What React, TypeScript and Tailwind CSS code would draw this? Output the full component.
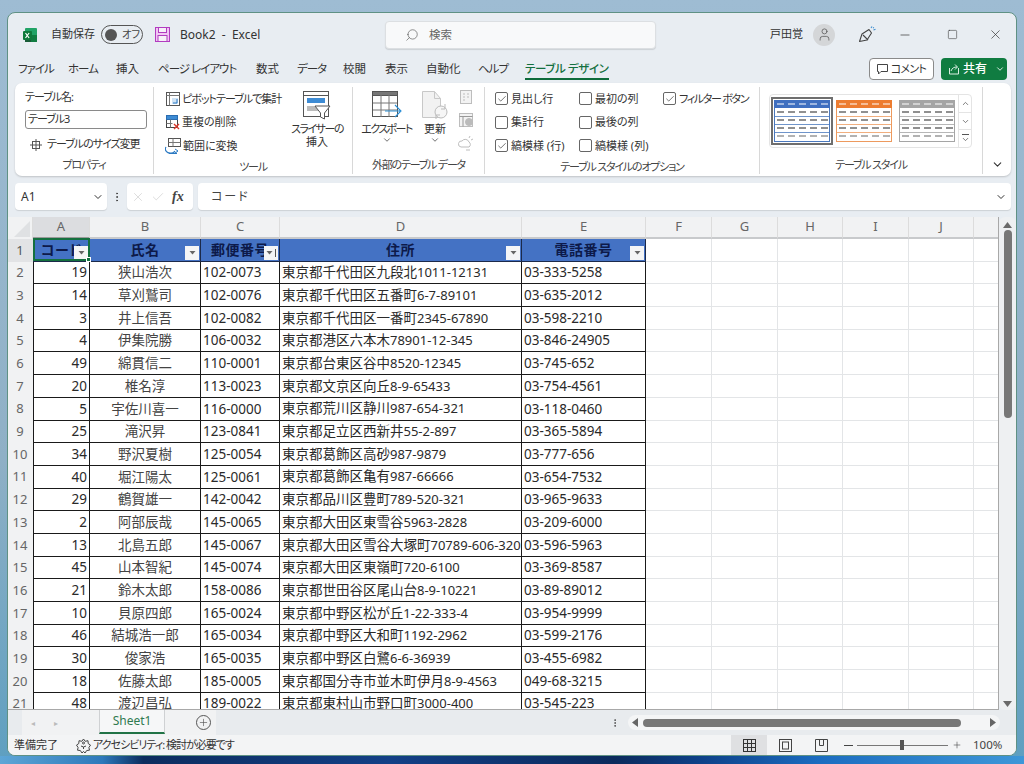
import React from "react";
import { Search, X, Minus, Square, ChevronDown, Check, Plus, User, ChevronUp, MoreVertical } from "lucide-react";

const FONT = "[font-family:'Noto_Sans','Noto_Sans_CJK_JP',sans-serif]";

const rows: [string, string, string, string, string][] = [
  ["19", "狭山浩次", "102-0073", "東京都千代田区九段北1011-12131", "03-333-5258"],
  ["14", "草刈鷲司", "102-0076", "東京都千代田区五番町6-7-89101", "03-635-2012"],
  ["3", "井上信吾", "102-0082", "東京都千代田区一番町2345-67890", "03-598-2210"],
  ["4", "伊集院勝", "106-0032", "東京都港区六本木78901-12-345", "03-846-24905"],
  ["49", "綿貫信二", "110-0001", "東京都台東区谷中8520-12345", "03-745-652"],
  ["20", "椎名淳", "113-0023", "東京都文京区向丘8-9-65433", "03-754-4561"],
  ["5", "宇佐川喜一", "116-0000", "東京都荒川区静川987-654-321", "03-118-0460"],
  ["25", "滝沢昇", "123-0841", "東京都足立区西新井55-2-897", "03-365-5894"],
  ["34", "野沢夏樹", "125-0054", "東京都葛飾区高砂987-9879", "03-777-656"],
  ["40", "堀江陽太", "125-0061", "東京都葛飾区亀有987-66666", "03-654-7532"],
  ["29", "鶴賀雄一", "142-0042", "東京都品川区豊町789-520-321", "03-965-9633"],
  ["2", "阿部辰哉", "145-0065", "東京都大田区東雪谷5963-2828", "03-209-6000"],
  ["13", "北島五郎", "145-0067", "東京都大田区雪谷大塚町70789-606-320", "03-596-5963"],
  ["45", "山本智紀", "145-0074", "東京都大田区東嶺町720-6100", "03-369-8587"],
  ["21", "鈴木太郎", "158-0086", "東京都世田谷区尾山台8-9-10221", "03-89-89012"],
  ["10", "貝原四郎", "165-0024", "東京都中野区松が丘1-22-333-4", "03-954-9999"],
  ["46", "結城浩一郎", "165-0034", "東京都中野区大和町1192-2962", "03-599-2176"],
  ["30", "俊家浩", "165-0035", "東京都中野区白鷺6-6-36939", "03-455-6982"],
  ["18", "佐藤太郎", "185-0005", "東京都国分寺市並木町伊月8-9-4563", "049-68-3215"],
  ["48", "渡辺昌弘", "189-0022", "東京都東村山市野口町3000-400", "03-545-223"],
];

const widths = ["w-[57px]", "w-[111px]", "w-[79px]", "w-[242px]", "w-[124px]"];
const emptyCols = ["w-[66px]", "w-[66px]", "w-[65px]", "w-[66px]", "w-[65px]", "w-[25px]"];

function Address({ text }: { text: string }) {
  const parts = text.split(/([\x00-\x7f]+)/).filter(Boolean);
  return (
    <span>
      {parts.map((p, i) => (
        <span key={i} className={/^[\x00-\x7f]/.test(p) ? "text-[13px]" : "text-[13.5px]"}>{p}</span>
      ))}
    </span>
  );
}

function EmptyCells() {
  return (
    <>
      {emptyCols.map((w, i) => (
        <div key={i} className={`${w} shrink-0 bg-white border-r border-b border-[#e3e5e7]`} />
      ))}
    </>
  );
}

function FilterBtn({ sorted }: { sorted?: boolean }) {
  return (
    <div className="absolute right-[1px] bottom-[1px] w-[14px] h-[14px] bg-[#f4f5f6] flex items-center justify-center gap-[1px]">
      <svg width="7" height="5" viewBox="0 0 7 5"><path d="M0.5 1h6L3.5 4.5z" fill="#666" /></svg>
      {sorted && <svg width="3" height="8" viewBox="0 0 3 8"><path d="M1.5 0v8" stroke="#555" strokeWidth="1" /></svg>}
    </div>
  );
}

function HeaderCell({ w, text, sorted, first }: { w: string; text: string; sorted?: boolean; first?: boolean }) {
  return (
    <div className={`${w} shrink-0 relative h-full bg-[#4472c4] border-r border-b border-[#1c2a4a] flex items-center justify-center overflow-hidden font-bold text-[14px] text-[#0d1a4a] tracking-[0.5px] ${first ? "pl-[1px]" : ""}`}>
      <span className="whitespace-nowrap">{text}</span>
      <FilterBtn sorted={sorted} />
    </div>
  );
}

function Check13({ on, label, w, tight }: { on?: boolean; label?: string; w: string; tight?: boolean }) {
  return (
    <div className={`${w} flex items-center gap-[3px] h-[23.5px] shrink-0`}>
      <div className="w-[13px] h-[13px] rounded-[2px] border border-[#666] bg-white flex items-center justify-center">
        {on && <Check size={10} strokeWidth={1.6} className="text-[#333]" />}
      </div>
      <span className={`whitespace-nowrap text-[11px] text-[#333] ${tight ? "tracking-[-1.3px]" : ""}`}>{label}</span>
    </div>
  );
}

function TablePreview({ head, line }: { head: string; line: string }) {
  const dashes = [3, 14, 25, 36, 47];
  return (
    <svg width="56" height="42" viewBox="0 0 56 42" className="shrink-0">
      <rect x="0.5" y="0.5" width="55" height="41" fill="#fff" stroke={line} />
      <rect x="0" y="0" width="56" height="8" fill={head} />
      {[16.5, 24.5, 32.5].map((y) => (
        <line key={y} x1="0" x2="56" y1={y} y2={y} stroke={line} strokeWidth="0.8" />
      ))}
      {dashes.map((x) => (
        <g key={x}>
          <rect x={x} y="3.5" width="7" height="1" fill="#fff" />
          {[12, 20, 28, 36].map((y, i) => (
            <rect key={y} x={x} y={y - 0.5} width="7" height="1" fill={i === 3 ? "#666" : "#222"} />
          ))}
        </g>
      ))}
    </svg>
  );
}

function ExcelIcon() {
  return (
    <svg width="16" height="16" viewBox="0 0 16 16" className="shrink-0">
      <rect x="3" y="1" width="12" height="14" rx="1" fill="#21a366" />
      <rect x="9" y="8" width="6" height="7" fill="#107c41" />
      <rect x="3" y="8" width="6" height="7" fill="#185c37" />
      <rect x="1" y="4" width="9" height="9" rx="1" fill="#0f7a3c" />
      <path d="M3.5 6l3.6 5M7.1 6l-3.6 5" stroke="#fff" strokeWidth="1.2" />
    </svg>
  );
}

function SaveIcon() {
  return (
    <svg width="15" height="15" viewBox="0 0 15 15" className="shrink-0">
      <rect x="0.5" y="0.5" width="14" height="14" fill="#f1c6f4" stroke="#b23cc0" />
      <rect x="3.5" y="0.5" width="8" height="5" fill="#f6f0f8" stroke="#b23cc0" />
      <rect x="3" y="8.5" width="9" height="6" fill="#f6f0f8" stroke="#b23cc0" />
    </svg>
  );
}

function WandIcon() {
  return (
    <svg width="18" height="18" viewBox="0 0 18 18" fill="none" stroke="#444" strokeWidth="1.1" className="shrink-0">
      <path d="M1.5 15.5L4 8l7-4.5 2.5 3.5L9 14l-7.5 1.5z" strokeLinejoin="round" />
      <path d="M5 9l5 5" />
      <path d="M13 2l1-1.5M15.5 4l2-.8M15 1.5l1 .5" stroke="#3f8fd0" />
    </svg>
  );
}

function PivotIcon() {
  return (
    <svg width="16" height="16" viewBox="0 0 16 16" fill="none" className="shrink-0">
      <rect x="1.5" y="1.5" width="13" height="13" fill="#fff" stroke="#555" />
      <path d="M1.5 4.5h13M4.5 1.5v13" stroke="#777" />
      <path d="M7 7h6v6H7z" fill="#cfe3f5" />
      <path d="M8 12h4V8" stroke="#2b79c2" />
    </svg>
  );
}

function DupIcon() {
  return (
    <svg width="16" height="16" viewBox="0 0 16 16" fill="none" className="shrink-0">
      <rect x="1.5" y="1.5" width="11" height="12" fill="#fff" stroke="#444" />
      <rect x="1.5" y="1.5" width="11" height="4" fill="#3d8bd4" stroke="#2b6cb0" />
      <path d="M1.5 9.5h6M5.5 5.5v8" stroke="#777" />
      <path d="M9 10l5 5M14 10l-5 5" stroke="#d9392c" strokeWidth="1.4" />
    </svg>
  );
}

function ConvertIcon() {
  return (
    <svg width="17" height="16" viewBox="0 0 17 16" fill="none" className="shrink-0">
      <rect x="3.5" y="0.5" width="12" height="8" fill="#fff" stroke="#555" />
      <path d="M3.5 4.5h12M8 .5v8" stroke="#777" />
      <path d="M1 9a5 4 0 0 0 9 4" stroke="#2b79c2" strokeWidth="1.3" />
      <path d="M4 15.5h8" stroke="#2b79c2" strokeWidth="1.3" />
      <path d="M10 11l3 2-3 2" stroke="#2b79c2" />
    </svg>
  );
}

function SliceIcon() {
  return (
    <svg width="28" height="30" viewBox="0 0 28 30" fill="none" className="shrink-0">
      <rect x="0.5" y="0.5" width="25" height="25" fill="#fff" stroke="#555" />
      <path d="M0.5 4.5h25" stroke="#555" />
      <rect x="4" y="7" width="18" height="5" fill="#3d8bd4" />
      <rect x="4" y="15" width="11" height="5" fill="#bbb" />
      <path d="M12 15h15l-5.5 7v6l-4-2v-4z" fill="#fff" stroke="#555" />
    </svg>
  );
}

function ExportIcon() {
  return (
    <svg width="30" height="30" viewBox="0 0 30 30" fill="none" className="shrink-0">
      <rect x="0.5" y="0.5" width="25" height="25" fill="#fff" stroke="#555" />
      <rect x="0.5" y="0.5" width="25" height="4" fill="#777" stroke="#555" />
      <path d="M9 4v22M17 4v22M1 12h24M1 19h24" stroke="#777" />
      <path d="M13 20h15M23 14l6 6-6 6" stroke="#2b8fd6" strokeWidth="1.1" fill="none" />
    </svg>
  );
}

function RefreshIcon() {
  return (
    <svg width="28" height="30" viewBox="0 0 28 30" fill="none" className="shrink-0">
      <path d="M1.5.5h12l6 7v19h-18z" fill="#f2f2f2" stroke="#c8c8c8" />
      <path d="M13.5.5v7h6" stroke="#c8c8c8" />
      <circle cx="20" cy="21" r="6" fill="#f6f6f6" stroke="#bbb" />
      <path d="M24 13v5h-4M15 28v-4h4" stroke="#bbb" />
    </svg>
  );
}

function SmallGrey({ k }: { k: number }) {
  return (
    <svg width="16" height="16" viewBox="0 0 16 16" fill="none" stroke="#bdbdbd" className="shrink-0">
      {k === 0 && (
        <>
          <rect x="2.5" y="1.5" width="11" height="13" fill="#f3f3f3" />
          <path d="M5 5h2M9 5h2M5 8h2M9 8h2M5 11h2" />
        </>
      )}
      {k === 1 && (
        <>
          <rect x="1.5" y="1.5" width="13" height="13" fill="#f3f3f3" />
          <path d="M1.5 4.5h13M5 4.5v10" stroke="#999" />
          <circle cx="11" cy="10" r="3.5" fill="#bbb" stroke="#bbb" />
        </>
      )}
      {k === 2 && (
        <>
          <path d="M3 12a3 3 0 0 1 1-6 4 4 0 0 1 7 1 3 3 0 0 1 0 5z" />
          <path d="M12 1l-1 2M15 4l-2 1M8 15h4" />
        </>
      )}
    </svg>
  );
}

function ToolRow({ icon, text, tight }: { icon: React.ReactNode; text: string; tight?: boolean }) {
  return (
    <div className="flex items-center gap-[1px] h-[23.5px] whitespace-nowrap text-[11px] text-[#333]">
      {icon}
      <span className={tight ? "tracking-[-1px]" : ""}>{text}</span>
    </div>
  );
}

function GroupLabel({ children }: { children: string }) {
  return <div className="h-[18px] text-center text-[11px] text-[#444] leading-[18px] whitespace-nowrap tracking-[-1.2px]">{children}</div>;
}

const tabs: [string, string][] = [
  ["ファイル", "w-[34px] tracking-[-1px]"],
  ["ホーム", "ml-[16px] w-[30px] tracking-[-1px]"],
  ["挿入", "ml-[18px] w-[23px]"],
  ["ページ レイアウト", "ml-[19px] w-[79px] tracking-[-1px]"],
  ["数式", "ml-[19px] w-[23px]"],
  ["データ", "ml-[18px] w-[29px] tracking-[-1px]"],
  ["校閲", "ml-[17px] w-[23px]"],
  ["表示", "ml-[19px] w-[23px]"],
  ["自動化", "ml-[18px] w-[35px]"],
  ["ヘルプ", "ml-[17px] w-[30px] tracking-[-1px]"],
];

export default function App() {
  return (
    <div className={`w-[1024px] h-[764px] overflow-hidden pt-[12px] pl-[7px] bg-[linear-gradient(180deg,#9ebcd3_0%,#8fb0c6_60%,#5e9fc0_100%)] ${FONT}`}>
      <div className="w-[1010px] h-[744px] rounded-[8px] border border-[#5f9184] bg-[#e8edf2] overflow-hidden flex flex-col [font-feature-settings:'palt']">
        {/* title bar */}
        <div className="h-[43px] shrink-0 flex items-center pl-[14px] text-[12px] text-[#333]">
          <ExcelIcon />
          <span className="ml-[13px] w-[46px] text-[11px] whitespace-nowrap">自動保存</span>
          <div className="ml-[4px] w-[42px] h-[19px] rounded-full border border-[#555] flex items-center pl-[3px] gap-[5px] text-[10.5px] text-[#444]">
            <div className="w-[12px] h-[12px] rounded-full bg-[#555]" />
            <span className="tracking-[-0.5px]">オフ</span>
          </div>
          <div className="ml-[12px]"><SaveIcon /></div>
          <span className="ml-[10px] text-[12px] whitespace-nowrap w-[205px]">Book2&nbsp; -&nbsp; Excel</span>
          <div className="w-[271px] h-[28px] rounded-[4px] bg-[#f8f9fa] border border-[#dcdfe2] flex items-center pl-[19px] text-[11.5px] text-[#666] shadow-[0_1px_1px_rgba(0,0,0,0.12)]">
            <Search size={14} strokeWidth={1.1} className="-scale-x-100 text-[#555]" />
            <span className="ml-[10px]">検索</span>
          </div>
          <span className="ml-[114px] w-[34px] text-[11px] whitespace-nowrap">戸田覚</span>
          <div className="ml-[9px] w-[22px] h-[22px] rounded-full bg-[#d4d6d8] flex items-center justify-center">
            <User size={15} strokeWidth={1.2} className="text-[#555]" />
          </div>
          <div className="ml-[23px]"><WandIcon /></div>
          <Minus size={14} strokeWidth={1.2} className="ml-[22px] text-[#333]" />
          <Square size={11} strokeWidth={1.2} className="ml-[35px] text-[#333]" />
          <X size={15} strokeWidth={1.1} className="ml-[30px] text-[#333]" />
        </div>

        {/* tabs */}
        <div className="h-[27px] shrink-0 flex items-start pl-[10px] pt-[3px] text-[11.5px] text-[#333]">
          <div className="flex h-[20px] items-center w-[507px]">
            {tabs.map(([t, cls]) => (
              <span key={t} className={`${cls} shrink-0 whitespace-nowrap`}>{t}</span>
            ))}
          </div>
          <div className="h-[21px] w-[84px] border-b-2 border-[#0e6b3a] text-[#14703f] font-medium whitespace-nowrap flex items-center tracking-[-0.4px]">テーブル デザイン</div>
          <div className="ml-[260px] -mt-[1px] w-[65px] h-[22px] bg-white border border-[#8a8a8a] rounded-[4px] flex items-center justify-center gap-[3px] text-[11px]">
            <svg width="11" height="11" viewBox="0 0 11 11" fill="none" stroke="#444"><path d="M.5.5h10v7H4l-2.500 2.500V7.500h-1z" /></svg>
            <span className="whitespace-nowrap tracking-[-0.7px]">コメント</span>
          </div>
          <div className="ml-[7px] -mt-[1px] w-[66px] h-[22px] bg-[#107c41] rounded-[4px] flex items-center pl-[7px] text-white text-[12px] whitespace-nowrap">
            <svg width="12" height="12" viewBox="0 0 12 12" fill="none" stroke="#d9eee2"><path d="M1.500 5v6h9V5M3 8c1-3 3-4 6-4M7 1.500L9.500 4 7 6.500" /></svg>
            <span className="ml-[3px] font-medium">共有</span>
            <ChevronDown size={10} strokeWidth={2} className="ml-[8px]" />
          </div>
        </div>

        {/* ribbon */}
        <div className="ml-[7px] w-[996px] h-[93px] shrink-0 bg-white rounded-[7px] shadow-[0_1px_2px_rgba(0,0,0,0.18)] flex pt-[4px] pb-[2px]">
          {/* properties */}
          <div className="w-[139px] shrink-0 border-r border-[#d8d8d8] flex flex-col pl-[10px]">
            <div className="h-[16px] mt-[2px] text-[11px] text-[#333] leading-[16px] tracking-[-1px]">テーブル名:</div>
            <div className="mt-[5px] w-[122px] h-[19px] rounded-[3px] border border-[#8a8a8a] pl-[2px] text-[11px] text-[#333] flex items-center tracking-[-1px]">テーブル3</div>
            <div className="mt-[4px] h-[23px] pl-[5px] flex items-center text-[11px] text-[#333] whitespace-nowrap">
              <svg width="12" height="12" viewBox="0 0 12 12" fill="none" stroke="#555" className="shrink-0">
                <rect x="2.500" y="2.500" width="7" height="7" />
                <path d="M2.500 6h7M6 0v12M0 6h2M10 6h2" />
              </svg>
              <span className="ml-[5px] tracking-[-1px]">テーブルのサイズ変更</span>
            </div>
            <div className="mt-auto pr-[10px]"><GroupLabel>プロパティ</GroupLabel></div>
          </div>

          {/* tools */}
          <div className="w-[199px] shrink-0 border-r border-[#d8d8d8] flex flex-col">
            <div className="flex flex-1">
              <div className="pl-[11px] w-[135px] flex flex-col">
                <ToolRow tight icon={<PivotIcon />} text="ピボットテーブルで集計" />
                <ToolRow icon={<DupIcon />} text="重複の削除" />
                <ToolRow icon={<ConvertIcon />} text="範囲に変換" />
              </div>
              <div className="w-[56px] flex flex-col items-center pt-[4px] text-[11px] text-[#333] leading-[13px] text-center">
                <SliceIcon />
                <span className="mt-[1px] whitespace-nowrap tracking-[-1.5px]">スライサーの</span>
                <span>挿入</span>
              </div>
            </div>
            <GroupLabel>ツール</GroupLabel>
          </div>

          {/* external */}
          <div className="w-[132px] shrink-0 border-r border-[#d8d8d8] flex flex-col">
            <div className="flex flex-1">
              <div className="w-[67px] flex flex-col items-center pt-[4px] text-[11px] text-[#333]">
                <ExportIcon />
                <span className="mt-[1px] leading-[13px] whitespace-nowrap tracking-[-1.6px]">エクスポート</span>
                <ChevronDown size={10} className="text-[#555]" />
              </div>
              <div className="w-[36px] -ml-[3px] flex flex-col items-center pt-[4px] text-[11px] text-[#333]">
                <RefreshIcon />
                <span className="mt-[1px] leading-[13px]">更新</span>
                <ChevronDown size={10} className="text-[#555]" />
              </div>
              <div className="ml-[5px] pt-[2px] flex flex-col gap-[7px]">
                <SmallGrey k={0} />
                <SmallGrey k={1} />
                <SmallGrey k={2} />
              </div>
            </div>
            <GroupLabel>外部のテーブル データ</GroupLabel>
          </div>

          {/* options */}
          <div className="w-[275px] shrink-0 border-r border-[#d8d8d8] flex flex-col pl-[10px]">
            <div className="flex-1 flex">
              <div className="flex flex-col w-[84px] shrink-0">
                <Check13 on w="w-[84px]" label="見出し行" />
                <Check13 w="w-[84px]" label="集計行" />
                <Check13 on w="w-[84px]" label="縞模様 (行)" />
              </div>
              <div className="flex flex-col w-[84px] shrink-0">
                <Check13 w="w-[84px]" label="最初の列" />
                <Check13 w="w-[84px]" label="最後の列" />
                <Check13 w="w-[84px]" label="縞模様 (列)" />
              </div>
              <div className="flex flex-col">
                <Check13 tight on w="w-[90px]" label="フィルター ボタン" />
              </div>
            </div>
            <div className="pr-[10px]"><GroupLabel>テーブル スタイルのオプション</GroupLabel></div>
          </div>

          {/* styles */}
          <div className="w-[223px] shrink-0 border-r border-[#d8d8d8] flex flex-col pl-[9px] pr-[9px]">
            <div className="mt-[7px] h-[54px] w-[203px] rounded-[4px] border border-[#e4e4e4] flex items-center">
              <div className="flex-1 flex items-center">
                <div className="ml-[1px] border-2 border-[#6e6e6e] p-[1.5px] w-[62px] h-[48px] flex items-center justify-center">
                  <TablePreview head="#3f6fc0" line="#4a78bd" />
                </div>
                <div className="ml-[3px]"><TablePreview head="#ed7d31" line="#ed9a5e" /></div>
                <div className="ml-[7px]"><TablePreview head="#a5a5a5" line="#a5a5a5" /></div>
              </div>
              <div className="w-[13px] h-full border-l border-[#e4e4e4] flex flex-col text-[#555]">
                <div className="flex-1 flex items-center justify-center border-b border-[#e4e4e4]"><ChevronUp size={9} strokeWidth={2} /></div>
                <div className="flex-1 flex items-center justify-center border-b border-[#e4e4e4]"><ChevronDown size={9} strokeWidth={2} /></div>
                <div className="flex-1 flex flex-col items-center justify-center">
                  <div className="w-[7px] h-px bg-[#555]" />
                  <ChevronDown size={9} strokeWidth={2} />
                </div>
              </div>
            </div>
            <div className="mt-auto"><GroupLabel>テーブル スタイル</GroupLabel></div>
          </div>
          <div className="flex-1 flex items-end justify-center pb-[3px]">
            <ChevronDown size={13} strokeWidth={2} className="text-[#333]" />
          </div>
        </div>

        {/* formula bar */}
        <div className="mt-[7px] ml-[7px] w-[996px] h-[27px] shrink-0 flex items-stretch">
          <div className="w-[92px] bg-white rounded-[4px] shadow-[0_1px_1px_rgba(0,0,0,0.12)] flex items-center pl-[6px] pr-[3px] justify-between text-[12px] text-[#333]">
            <span>A1</span>
            <ChevronDown size={12} strokeWidth={2} />
          </div>
          <div className="w-[20px] flex items-center justify-center text-[#444]"><MoreVertical size={12} /></div>
          <div className="w-[66px] bg-white rounded-[4px] shadow-[0_1px_1px_rgba(0,0,0,0.12)] flex items-center pl-[4px] text-[#c4c4c4]">
            <X size={14} strokeWidth={1} />
            <Check size={14} strokeWidth={1} className="ml-[6px]" />
            <span className="ml-[7px] [font-family:'Liberation_Serif',serif] italic font-bold text-[14px] text-[#444]">fx</span>
          </div>
          <div className="ml-[5px] flex-1 bg-white rounded-[4px] shadow-[0_1px_1px_rgba(0,0,0,0.12)] flex items-center pl-[13px] pr-[4px] justify-between text-[12px] text-[#444]">
            <span className="tracking-[2px] [font-feature-settings:'normal']">コード</span>
            <ChevronDown size={12} strokeWidth={2} className="text-[#333]" />
          </div>
        </div>

        {/* grid */}
        <div className="mt-[7px] h-[493px] shrink-0 flex overflow-hidden text-[13.5px] text-[#2a2a2a] [font-feature-settings:'normal']">
          <div className="w-[991px] shrink-0 relative overflow-hidden border-b border-[#a8a8a8] border-r">
            <div className="flex h-[22px] text-[13px] text-[#666] bg-[#f1f2f3]">
              <div className="w-[25px] shrink-0 relative border-r border-[#dcdcdc]">
                <svg width="16" height="16" viewBox="0 0 16 16" className="absolute right-[2px] bottom-[2px]"><path d="M16 0v16H0z" fill="#dfe1e3" /></svg>
              </div>
              {["A", "B", "C", "D", "E", "F", "G", "H", "I", "J", ""].map((c, i) => {
                const w = [...widths, ...emptyCols][i];
                return (
                  <div key={i} className={`${w} shrink-0 flex items-center justify-center border-r border-[#dcdcdc] border-b-2 ${i === 0 ? "bg-[#dcdde0] border-b-[#9a9a9a]" : "border-b-[#c8cacc]"}`}>
                    {c}
                  </div>
                );
              })}
            </div>
            {/* row 1 */}
            <div className="flex h-[22.7px]">
              <div className="w-[25px] shrink-0 bg-[#e2e3e5] text-[#555] flex items-center justify-center text-[13px] pr-[1px]">1</div>
              <HeaderCell first w={widths[0]} text="コード" />
              <HeaderCell w={widths[1]} text="氏名" />
              <HeaderCell sorted w={widths[2]} text="郵便番号" />
              <HeaderCell w={widths[3]} text="住所" />
              <HeaderCell w={widths[4]} text="電話番号" />
              <EmptyCells />
            </div>
            {rows.map((r, i) => (
              <div key={i} className="flex h-[22.7px]">
                <div className="w-[25px] shrink-0 bg-[#f1f2f3] text-[#666] flex items-center justify-center text-[13px] pr-[1px]">{i + 2}</div>
                <div className={`${widths[0]} shrink-0 bg-white flex items-center justify-end pr-[2px] border-l border-r border-b border-[#1a1a1a] whitespace-nowrap`}>{r[0]}</div>
                <div className={`${widths[1]} shrink-0 bg-white flex items-center justify-center border-r border-b border-[#1a1a1a] whitespace-nowrap text-[#444]`}>{r[1]}</div>
                <div className={`${widths[2]} shrink-0 bg-white flex items-center pl-[2px] border-r border-b border-[#1a1a1a] whitespace-nowrap`}>{r[2]}</div>
                <div className={`${widths[3]} shrink-0 bg-white flex items-center pl-[2px] border-r border-b border-[#1a1a1a] whitespace-nowrap overflow-hidden`}><Address text={r[3]} /></div>
                <div className={`${widths[4]} shrink-0 bg-white flex items-center pl-[2px] border-r border-b border-[#1a1a1a] whitespace-nowrap`}>{r[4]}</div>
                <EmptyCells />
              </div>
            ))}
            {/* selected cell */}
            <div className="absolute left-[25px] top-[21px] w-[57px] h-[23px] border-2 border-[#14703f]">
              <div className="absolute -right-[3px] -bottom-[3px] w-[5px] h-[5px] bg-[#14703f] border border-white" />
            </div>
          </div>
          {/* vertical scrollbar */}
          <div className="flex-1 flex flex-col items-center bg-[#eef0f2] pt-[5px] pb-[2px] rounded-[6px]">
            <svg width="9" height="6" viewBox="0 0 9 6"><path d="M4.500 0L9 6H0z" fill="#6a6a6a" /></svg>
            <div className="mt-[2px] w-[8px] h-[188px] rounded-full bg-[#777]" />
            <svg width="9" height="6" viewBox="0 0 9 6" className="mt-auto mb-[1px]"><path d="M4.500 6L9 0H0z" fill="#6a6a6a" /></svg>
          </div>
        </div>

        {/* sheet bar */}
        <div className="h-[25px] shrink-0 flex items-center bg-[#e8ebee] text-[12px]">
          <div className="ml-[14px] w-[194px] h-full flex items-center bg-[#f1f2f3] text-[#bbb] text-[8px]">
            <span className="ml-[9px]">◂</span>
            <span className="ml-[19px]">▸</span>
            <div className="ml-[41px] -mt-[2px] h-[24px] w-[66px] bg-[#f6f7f8] border-x border-[#cfd1d3] border-b-2 border-b-[#217346] flex items-center justify-center text-[#2f7a50] text-[12px]">Sheet1</div>
            <div className="ml-[31px] w-[15px] h-[15px] rounded-full border border-[#555] flex items-center justify-center text-[#555]"><Plus size={11} strokeWidth={1.4} /></div>
          </div>
          <div className="ml-[394px] w-[10px] flex justify-center text-[#444]"><MoreVertical size={12} /></div>
          <div className="ml-[8px] w-[372px] h-[15px] rounded-full bg-[#f4f5f6] flex items-center pl-[4px] pr-[4px]">
            <svg width="6" height="9" viewBox="0 0 6 9" className="shrink-0"><path d="M0 4.500L6 0v9z" fill="#666" /></svg>
            <div className="ml-[5px] w-[318px] h-[8px] rounded-full bg-[#777]" />
            <svg width="6" height="9" viewBox="0 0 6 9" className="shrink-0 ml-auto"><path d="M6 4.500L0 0v9z" fill="#666" /></svg>
          </div>
        </div>

        {/* status bar */}
        <div className="flex-1 flex items-center bg-[#f3f4f5] text-[11px] text-[#333] pl-[6px]">
          <span className="w-[62px] whitespace-nowrap">準備完了</span>
          <svg width="15" height="15" viewBox="0 0 15 15" fill="none" stroke="#444" className="shrink-0">
            <path d="M7.500 1l1.700 2.300 2.800-.6.2 2.800 2.300 1.600-1.600 2.400.6 2.700-2.800.3L9 15l-1.500-1.600L6 15l-1.700-2.500-2.800-.3.6-2.700L.5 7.100l2.300-1.600.2-2.800 2.800.6z" />
            <circle cx="7.500" cy="5" r="1" />
            <path d="M5 8l2.500 1L10 8M7.500 9v2" />
          </svg>
          <span className="ml-[2px] w-[140px] whitespace-nowrap tracking-[-1px]">アクセシビリティ: 検討が必要です</span>
          <div className="ml-[498px] w-[36px] h-full bg-[#dfe0e2] flex items-center justify-center">
            <svg width="13" height="13" viewBox="0 0 13 13" fill="none" stroke="#333"><rect x=".5" y=".5" width="12" height="12" /><path d="M4.500.5v12M8.500.5v12M.5 4.500h12M.5 8.500h12" /></svg>
          </div>
          <div className="w-[36px] flex justify-center">
            <svg width="13" height="13" viewBox="0 0 13 13" fill="none" stroke="#444"><rect x=".5" y=".5" width="12" height="12" /><rect x="3.500" y="3" width="6" height="7" /></svg>
          </div>
          <div className="w-[36px] flex justify-center">
            <svg width="13" height="13" viewBox="0 0 13 13" fill="none" stroke="#444"><path d="M.5 12.500V.5h12v12zM4.500.5v6h4V.5" /></svg>
          </div>
          <span className="ml-[5px] w-[9px] h-px bg-[#444]" />
          <div className="ml-[4px] w-[91px] h-px bg-[#777] relative">
            <div className="absolute left-[43px] -top-[5px] w-[4px] h-[10px] bg-[#555]" />
          </div>
          <Plus size={10} strokeWidth={1.4} className="ml-[4px] text-[#444]" />
          <span className="ml-[11px] whitespace-nowrap text-[11.5px] text-[#444]">100%</span>
        </div>
      </div>
      <div className="-ml-[7px] w-[1024px] h-[8px] bg-[linear-gradient(90deg,#5ea6d6_0%,#2d79bb_10%,#0c2c5e_14%,#123f86_38%,#0b2a5c_60%,#0d3f86_68%,#1b6cc0_80%,#3e97d8_100%)]" />
    </div>
  );
}
